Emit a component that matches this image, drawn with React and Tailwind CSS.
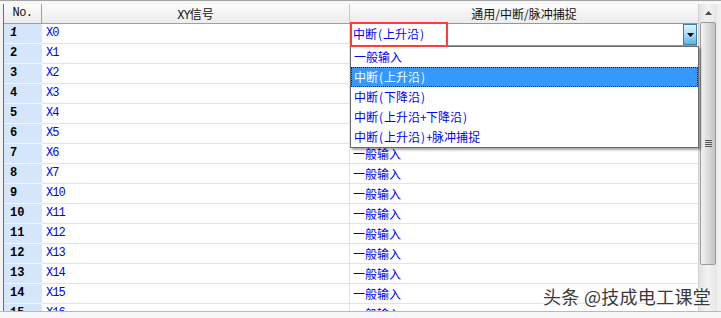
import React from "react";

const rows = [
  ["1", "X0"],
  ["2", "X1"],
  ["3", "X2"],
  ["4", "X3"],
  ["5", "X4"],
  ["6", "X5"],
  ["7", "X6"],
  ["8", "X7"],
  ["9", "X10"],
  ["10", "X11"],
  ["11", "X12"],
  ["12", "X13"],
  ["13", "X14"],
  ["14", "X15"],
  ["15", "X16"],
];

const options = [
  "一般输入",
  "中断(上升沿)",
  "中断(下降沿)",
  "中断(上升沿+下降沿)",
  "中断(上升沿)+脉冲捕捉",
];

const cjk = "font-['Noto_Sans_CJK_SC','Noto_Sans',sans-serif]";
const mono = "font-['Liberation_Mono','DejaVu_Sans_Mono',monospace]";

function T({ s }) {
  return (
    <>
      {s.split("").map((c, i) =>
        "()+".includes(c) ? (
          <span key={i} className="inline-block w-[6px] text-center">
            {c}
          </span>
        ) : (
          <span key={i}>{c}</span>
        )
      )}
    </>
  );
}

export default function App() {
  return (
    <div className={`relative w-[721px] h-[318px] overflow-hidden bg-[#f0f0f0] ${cjk} flex flex-col`}>
      <div className="h-px bg-[#a3a3a3]" />
      <div className="h-[3px] bg-[#f7f7f7]" />
      <div className="flex h-[307px]">
        <div className="w-[4px] bg-[#f4f4f4] border-r border-[#6e6e6e]" />
        <div className="w-[694px] flex flex-col overflow-hidden bg-white">
          {/* header */}
          <div className="flex h-[20px] shrink-0 bg-gradient-to-b from-[#fbfbfb] to-[#ececec] border-b border-[#a0a0a0] text-[12px] text-[#111] leading-[19px]">
            <div className={`w-[38px] shrink-0 border-r border-[#a0a0a0] text-center ${mono} text-[12px] tracking-[-0.5px]`}>No.</div>
            <div className="w-[308px] shrink-0 border-r border-[#c9c9c9] text-center">
              <span className={`${mono} text-[12px] tracking-[-1px]`}>XY</span>信号
            </div>
            <div className="w-[348px] shrink-0 text-center">通用/中断/脉冲捕捉</div>
          </div>
          {/* body */}
          {rows.map(([n, x], i) => (
            <div key={n} className="flex h-[20px] shrink-0">
              <div
                className={`w-[38px] shrink-0 bg-[#d5e6fb] border-b border-[#f2f7fd] pl-[6px] ${mono} font-bold text-[12px] leading-[19px] text-black ${i === 0 ? "italic" : ""}`}
              >
                {n}
              </div>
              <div className={`w-[308px] shrink-0 border-b border-r border-[#e3e3e3] pl-[4px] ${mono} text-[12px] tracking-[-1px] leading-[19px] text-[#0000ff]`}>
                {x}
              </div>
              <div className="relative w-[348px] shrink-0 border-b border-[#e3e3e3] pl-[3px] text-[12px] leading-[19px] text-[#0000ff]">
                {i === 0 ? (
                  <div className="absolute left-0 top-[-1px] w-[347px] h-[23px] z-10 flex bg-white border-t border-b border-[#7f9db9]">
                    <div className="flex-1 pl-[3px] leading-[20px] text-[#0000ff]">
                      <T s="中断(上升沿)" />
                    </div>
                    <div className="w-[14px] h-[21px] border border-[#3c7fb1] bg-gradient-to-b from-[#e3f4fc] via-[#a9dbf6] to-[#5cb3e4] flex items-center justify-center">
                      <svg width="7" height="4" viewBox="0 0 7 4">
                        <polygon points="0,0 7,0 3.5,4" fill="#000" />
                      </svg>
                    </div>
                  </div>
                ) : (
                  "一般输入"
                )}
              </div>
            </div>
          ))}
        </div>
        {/* scrollbar */}
        <div className="relative w-[19px] bg-gradient-to-r from-[#e3e3e3] via-[#f2f2f2] to-[#e6e6e6] border-l border-[#d0d0d0] flex flex-col items-center">
          <div className="h-[18px] w-full flex items-center justify-center">
            <svg width="7" height="4" viewBox="0 0 7 4">
              <polygon points="3.5,0 7,4 0,4" fill="#4a4a4a" />
            </svg>
          </div>
          <div className="w-[16px] h-[243px] rounded-[2px] border border-[#9b9b9b] bg-gradient-to-r from-[#f4f4f4] via-[#dcdcdc] to-[#c2c2c2] flex flex-col items-center justify-center gap-[1px]">
            <div className="w-[7px] h-px bg-[#555]" />
            <div className="w-[7px] h-px bg-[#555]" />
            <div className="w-[7px] h-px bg-[#555]" />
            <div className="w-[7px] h-px bg-[#555]" />
          </div>
        </div>
        <div className="w-[4px] bg-[#f0f0f0]" />
      </div>
      <div className="h-px bg-[#b9b9b9]" />
      <div className="flex-1 bg-[#f7f7f7]" />

      {/* dropdown list */}
      <div className="absolute left-[350px] top-[46px] w-[349px] h-[102px] bg-white border border-[#6a6a6a] shadow-[2px_2px_2px_rgba(0,0,0,0.35)] z-20 text-[12px]">
        {options.map((o, i) => (
          <div
            key={o}
            className={
              i === 1
                ? "h-[20px] leading-[18px] pl-[2px] bg-[#3399ff] text-white border border-dotted border-[#1a1a1a]"
                : "h-[20px] leading-[20px] pl-[3px] text-[#0000ff]"
            }
          >
            <T s={o} />
          </div>
        ))}
      </div>

      {/* red highlight box */}
      <div className="absolute left-[350px] top-[22px] w-[98px] h-[25px] border-2 border-[#ff3b3b] z-30" />

      {/* watermark */}
      <div className="absolute left-[543px] top-[286px] text-[18px] tracking-[0.3px] leading-[20px] text-[#3a3a3a] z-30 [text-shadow:0_0_2px_#fff,0_0_2px_#fff,0_0_3px_#fff]">
        头条 @技成电工课堂
      </div>
    </div>
  );
}
